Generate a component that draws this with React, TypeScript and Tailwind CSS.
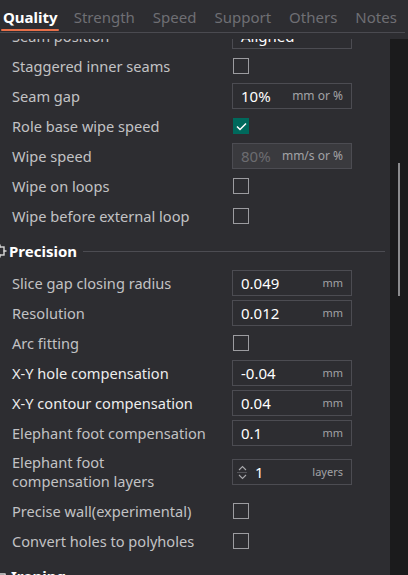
import React from 'react';

type Row =
  | { kind: 'check'; label: string; checked?: boolean; bright?: boolean }
  | { kind: 'input'; label: string; value: string; unit: string; disabled?: boolean; bright?: boolean; spin?: boolean }
  | { kind: 'section'; label: string; icon: 'precision' | 'ironing' };

const rows: Row[] = [
  { kind: 'input', label: 'Seam position', value: 'Aligned', unit: '' },
  { kind: 'check', label: 'Staggered inner seams' },
  { kind: 'input', label: 'Seam gap', value: '10%', unit: 'mm or %' },
  { kind: 'check', label: 'Role base wipe speed', checked: true },
  { kind: 'input', label: 'Wipe speed', value: '80%', unit: 'mm/s or %', disabled: true },
  { kind: 'check', label: 'Wipe on loops' },
  { kind: 'check', label: 'Wipe before external loop' },
  { kind: 'section', label: 'Precision', icon: 'precision' },
  { kind: 'input', label: 'Slice gap closing radius', value: '0.049', unit: 'mm' },
  { kind: 'input', label: 'Resolution', value: '0.012', unit: 'mm' },
  { kind: 'check', label: 'Arc fitting' },
  { kind: 'input', label: 'X-Y hole compensation', value: '-0.04', unit: 'mm', bright: true },
  { kind: 'input', label: 'X-Y contour compensation', value: '0.04', unit: 'mm', bright: true },
  { kind: 'input', label: 'Elephant foot compensation', value: '0.1', unit: 'mm' },
  { kind: 'input', label: 'Elephant foot compensation layers', value: '1', unit: 'layers', spin: true },
  { kind: 'check', label: 'Precise wall(experimental)' },
  { kind: 'check', label: 'Convert holes to polyholes' },
  { kind: 'section', label: 'Ironing', icon: 'ironing' },
];

const tabs = ['Quality', 'Strength', 'Speed', 'Support', 'Others', 'Notes'];

function SectionIcon({ icon }: { icon: 'precision' | 'ironing' }) {
  if (icon === 'precision') {
    return (
      <svg width="14" height="14" viewBox="0 0 14 14" className="-ml-[7px]">
        <rect x="3" y="3" width="8" height="8" fill="none" stroke="#d8d8d8" strokeWidth="1.4" />
        <path d="M7 0.5v3M7 10.5v3M0.5 7h3M10.5 7h3" stroke="#d8d8d8" strokeWidth="1.4" />
      </svg>
    );
  }
  return (
    <svg width="14" height="14" viewBox="0 0 14 14" className="-ml-[5px]">
      <path d="M2 9h10v3H2zM4 9V5h6l1 4" fill="none" stroke="#d8d8d8" strokeWidth="1.3" />
    </svg>
  );
}

function Checkbox({ checked }: { checked?: boolean }) {
  if (checked) {
    return (
      <div className="ml-[1px] flex h-4 w-4 items-center justify-center bg-[#00695c]">
        <svg width="11" height="9" viewBox="0 0 11 9">
          <path d="M1 4.5l3 3L10 1.5" fill="none" stroke="#ffffff" strokeWidth="1.5" />
        </svg>
      </div>
    );
  }
  return <div className="ml-[1px] h-4 w-4 border border-[#9c9ca0]" />;
}

function Field({ row }: { row: Extract<Row, { kind: 'input' }> }) {
  return (
    <div
      className={`flex h-[26px] w-[120px] items-center border border-[#4c4c52] ${
        row.disabled ? 'bg-[#3a3a3e]' : ''
      }`}
    >
      {row.spin && (
        <div className="ml-[3px] flex w-[12px] flex-col items-center gap-[1px]">
          <svg width="9" height="6" viewBox="0 0 9 6">
            <path d="M1 5l3.5-3.5L8 5" fill="none" stroke="#a8a8ac" strokeWidth="1.1" />
          </svg>
          <div className="h-px w-[10px] bg-[#55555a]" />
          <svg width="9" height="6" viewBox="0 0 9 6">
            <path d="M1 1l3.5 3.5L8 1" fill="none" stroke="#a8a8ac" strokeWidth="1.1" />
          </svg>
        </div>
      )}
      <span
        className={`${row.spin ? 'pl-[7px]' : 'pl-[8px]'} text-[15px] ${
          row.disabled ? 'text-[#6c6c70]' : 'text-white'
        }`}
      >
        {row.value}
      </span>
      <span className={`ml-auto pr-[8px] ${row.unit === 'mm' || row.unit === 'layers' ? 'text-[11px]' : 'text-[12px]'} text-[#a2a2a6]`}>
        {row.unit}
      </span>
    </div>
  );
}

export default function App() {
  return (
    <div
      className="flex h-[575px] w-[408px] flex-col overflow-hidden bg-[#2d2d31]"
      style={{ fontFamily: '"Noto Sans", "Open Sans", sans-serif' }}
    >
      {/* Tabs */}
      <div className="relative mr-[3px] flex h-[33px] shrink-0 items-end border-b border-[#4a4a50] pl-[3px]">
        {tabs.map((t, i) => (
          <div
            key={t}
            className={`relative h-full pt-[6px] text-[15px] ${
              i === 0 ? 'mr-[16px] font-bold text-white' : 'mr-[18px] text-[#6f6f74]'
            }`}
          >
            {t}
            {i === 0 && <div className="absolute bottom-[1px] left-[-2px] right-[-1px] h-[2px] rounded-full bg-[#e8704a]" />}
          </div>
        ))}
      </div>

      <div className="h-[6px] shrink-0" />

      <div className="flex min-h-0 flex-1">
        {/* Settings list */}
        <div className="w-[390px] overflow-hidden">
          <div className="mt-[-18px] flex flex-col">
            {rows.map((row, i) => {
              if (row.kind === 'section') {
                return (
                  <div key={i} className="flex h-[37px] items-center pr-[5px] pt-[3px]">
                    <SectionIcon icon={row.icon} />
                    <span className="ml-[2px] text-[15px] font-bold text-white">{row.label}</span>
                    <div className="ml-[6px] h-px flex-1 bg-[#4c4c52]" />
                  </div>
                );
              }
              const multi = row.label === 'Elephant foot compensation layers';
              return (
                <div key={i} className={`flex items-center pl-[12px] ${multi ? 'h-[48px]' : 'h-[30px]'}`}>
                  <div
                    className={`w-[220px] text-[14.6px] leading-[19px] ${
                      row.kind === 'input' && row.bright ? 'text-[#ececec]' : 'text-[#c2c2c4]'
                    }`}
                  >
                    {multi ? (
                      <>
                        Elephant foot
                        <br />
                        compensation layers
                      </>
                    ) : (
                      row.label
                    )}
                  </div>
                  {row.kind === 'check' ? <Checkbox checked={row.checked} /> : <Field row={row} />}
                </div>
              );
            })}
          </div>
        </div>

        {/* Scrollbar */}
        <div className="flex-1 bg-[#1b1b1c]">
          <div className="ml-[8px] mt-[124px] h-[133px] w-[2px] bg-[#8c8c8e]" />
        </div>
      </div>
    </div>
  );
}
